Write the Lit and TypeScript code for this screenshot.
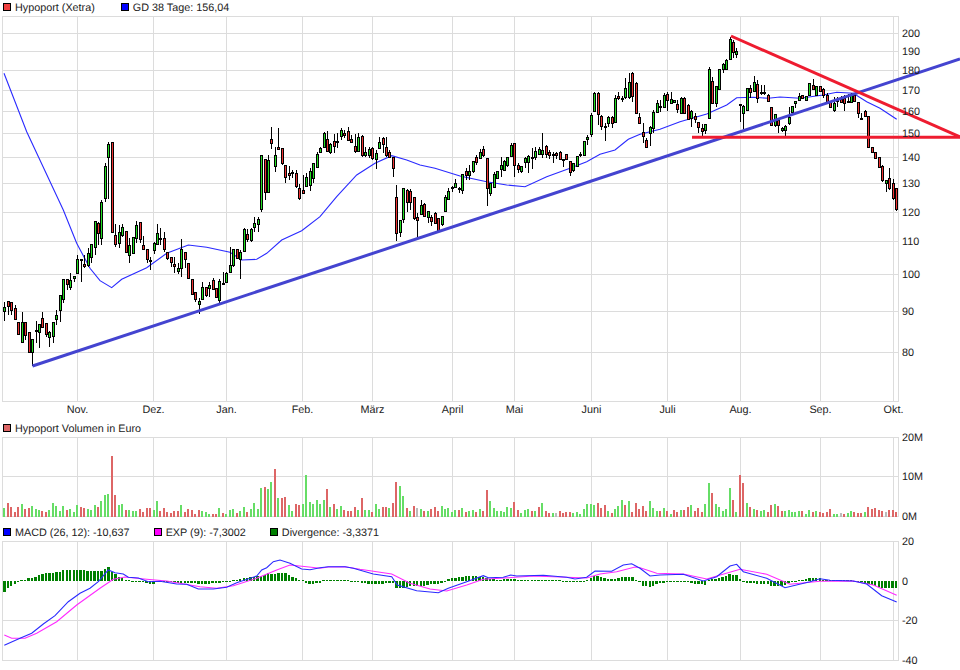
import { LitElement, html, svg, css } from "lit";
import { customElement } from "lit/decorators.js";

const X = (i: number) => 4.3 + 3.47 * i;

// candle rows: colour + body top, body bottom, wick top, wick bottom, in 3x crop units above a base y
const candleSections: [number, string][] = [
  [200, "G320,332,305,362 R302,318,302,345 R307,331,307,345 R325,358,315,358 R367,403,365,403 G367,425,337,430 R367,405,367,420 R397,455,397,455 G418,457,418,497 R390,392,362,430 G373,395,373,443 R355,382,337,382 R370,403,370,412 G397,412,393,440 G365,408,365,430 G345,356,330,375 G286,329,286,365 G237,298,237,310 R238,252,238,270 G240,262,220,270 G229,235,229,245 G178,218,165,220 R178,180,178,245 R193,198,165,205 G160,195,145,200 G133,170,133,190 G64,142,64,165 R70,100,65,135 G7,115,0,135"],
  [0, "G497,593,490,607 G433,470,425,597 R427,695,427,695"],
  [200, "R105,133,73,140 G97,128,75,145 G80,104,73,110 R92,155,92,155 G135,165,115,190 G112,160,112,163 G75,115,62,130 R67,117,67,130 R136,147,107,150 R148,178,148,190 R181,184,170,210 G130,150,125,163 G100,133,72,135 R113,116,85,135 R115,146,95,155 R157,175,155,180 R172,185,172,200 R193,199,170,220 G204,212,190,222 G148,205,118,230 R155,177,155,205 R190,233,190,233 R237,281,237,281 R277,296,277,305 G304,311,295,342 G260,298,245,300 R260,285,260,290 G256,265,245,290 R241,267,235,270 R265,290,265,295 G243,300,238,310 G250,252,215,255 G220,245,215,248 G196,215,140,218 G146,196,146,200 R148,175,148,175 G157,178,150,238 G87,152,85,153 R103,116,87,125 G88,120,85,125 G68,82,52,95 G58,71,50,97"],
  [0, "G466,627,466,636 R476,577,476,600 G481,575,465,580 R418,428,381,447 G466,497,440,515 R441,446,385,450 R445,488,445,495 R496,530,496,548 R520,524,498,540 R517,520,510,535 R520,557,510,563 R565,593,553,600 R571,578,525,580 G532,557,518,560 G514,554,505,572 G490,533,490,550 G463,500,455,503"],
  [100, "G145,157,142,157 G98,142,95,145 R118,152,92,152 G132,155,128,163 R122,137,102,158 R124,126,100,145 G90,108,85,120 R100,106,90,115 R94,120,82,122 R118,127,105,128 R139,152,102,158 G111,152,100,155 R108,165,105,170 G156,165,140,172 G148,165,140,175 R145,175,140,180 G158,178,150,208 G127,145,112,148 R115,132,110,160 R140,165,112,170 R155,172,150,175 R170,205,170,232 R292,398,255,422 G361,397,361,412 G265,356,265,370 R271,305,268,335 R272,305,268,330 R292,355,292,360 R352,361,338,410 G316,342,300,345 R313,349,310,352 G333,352,333,370 R350,362,345,378 R340,368,335,370 R355,389,355,392 G347,372,347,378 G292,334,285,335 G274,296,265,300 G261,264,258,275 G250,262,238,265 R265,268,262,280 G223,270,223,282 R212,226,205,240 G214,224,195,240 G183,214,183,218 R171,186,165,195 G156,175,148,178 R148,166,138,170 R175,265,173,317 G250,280,250,288 G222,262,215,265 G214,235,214,238 G196,206,172,230 G184,209,180,212 G172,196,172,200 G136,168,130,170 R130,195,128,232 R195,206,190,220 G198,212,198,220 G173,186,170,205 G167,186,165,220 R172,174,145,208 G154,172,140,180 G148,162,142,165 G150,163,100,175 R139,161,135,175 R155,165,150,178 R163,166,155,190 R158,165,155,178 R155,178,152,178 R176,178,176,202 R163,178,163,178 R184,216,184,228 G189,210,189,215 G168,197,168,197 R163,165,155,170 G124,165,124,168 G112,118,105,135 G45,103,38,110 G-21,32,-24,36 R-21,42,-24,75 R48,78,45,90 R78,82,70,122 G50,70,48,80 R50,70,48,85 G-5,67,-15,67 R-12,-6,-24,0 R-6,-3,-12,6 G-36,-9,-66,-3 G-54,-9,-80,-3 R-80,-12,-84,6 R-50,40,-54,42 R50,70,40,72"],
  [20, "R337,348,310,370 R360,380,355,385 G321,340,318,378 G277,323,270,340 G250,275,240,280 R257,259,240,275 G226,260,218,262 R222,240,215,272 G238,248,215,250 G240,246,240,250 R252,266,240,280 G234,280,232,282 R233,280,230,282 R255,297,252,298 G274,293,270,320 R287,298,280,310 R307,320,305,340 R325,332,312,347 G313,330,313,342 G148,295,142,295 R183,248,170,250 G198,248,198,260 G147,208,147,210 G133,147,130,158 G119,147,118,150 G57,117,52,120 R65,95,60,115 G93,103,85,113 R252,256,252,305 G258,280,255,328 G205,270,205,272 R205,215,195,235 G187,213,168,215 R193,233,180,248 R217,220,195,225 R217,219,195,225 R224,244,222,246 R262,316,262,318 G283,316,283,320 R300,316,296,340 G325,330,320,335 G318,331,316,348 G290,308,262,316 G259,276,259,278 G244,250,244,265 G227,240,218,242 R225,233,225,238 G229,241,228,243 G190,224,190,225 R196,206,178,210 G197,224,197,228 R198,212,198,215 R208,224,205,235 R224,250,218,252 R246,262,246,265 G248,270,232,275 R238,242,232,262 R238,247,228,250 R234,248,226,272 R243,246,222,250 G226,246,218,248 R226,243,218,245 R247,280,247,295 R294,297,280,300 R273,287,270,288 R287,380,287,382 R381,396,380,398 R396,415,396,418 R412,440,412,445 R438,481,435,485 G481,490,480,515 R475,503,445,510 R490,535,478,540 R505,568,505,572"],
];

type Candle = { c: string; t: number; b: number; wt: number; wb: number };
const candles: Candle[] = candleSections.flatMap(([base, rows]) =>
  rows.split(" ").map((r) => {
    const [t, b, wt, wb] = r.slice(1).split(",").map((n) => base + Number(n) / 3);
    return { c: r[0], t, b, wt, wb };
  })
);

const volumes =
  "G279 R264 R276 R291 R276 G267 R282 R279 G273 G282 G285 R288 R291 G285 G264 G273 G288 G273 R285 G282 G291 G270 R276 R279 G282 G285 G270 R276 G258 G240 G237 R123 R240 G270 G267 R285 G285 G288 G288 R282 R291 R279 R279 G285 G258 R288 R279 R291 R294 R288 R288 G270 R291 R282 R285 R297 R285 G288 G291 G297 R297 R297 G279 R294 G297 G285 G282 R294 G288 G276 R291 G282 G264 G282 G219 R216 G222 G201 R162 G249 R249 R246 G270 G288 R267 R270 G267 G180 G261 G267 G255 " +
  "G267 G255 R222 G276 R267 G282 G273 R285 R288 R288 R276 G285 R249 G285 G285 R291 G267 G282 R276 R276 G279 R264 R201 G213 G243 R279 G288 R273 N279 G282 R288 G288 R282 R276 R288 G273 G282 G279 G291 G285 R285 G279 R291 G288 G285 R291 G282 R288 R225 G258 G279 G288 G288 G291 G276 G279 R261 R285 G294 G285 G282 R288 G288 R276 G264 R288 R294 G294 N294 R288 R294 R291 R291 G294 G291 G297 G282 G267 G267 G270 R264 R279 R270 G288 R294 G282 G273 G255 R270 G258 R291 R264 R282 " +
  "R273 R288 G258 G279 G288 R288 G279 R288 G297 R285 R291 G285 R285 R276 G270 R288 R279 R291 G267 G204 R234 G267 G276 G288 G282 G219 R255 G291 R180 R204 G264 R276 G282 R285 G288 G285 R291 R270 G267 R273 R288 G288 G285 G291 G291 G288 R288 G297 G285 R291 G288 R291 R294 R291 R282 G297 G297 N294 R297 G294 G288 R291 R294 R294 G291 R276 R282 R279 R285 R288 N291 R285 R285 R291";

const hist = [
  -33, -20, -14, -8, -4, 1, 3, 9, 9, 12, 18, 21, 23, 24, 25, 26, 28, 32, 33, 33,
  33, 33, 33, 33, 30, 30, 30, 30, 30, 36, 42, 28, 20, 12, 8, 4, 1, -1, 0, -1,
  -4, -6, -8, -8, -4, -3, -3, -4, -3, -4, -5, -5, -5, -6, -6, -7, -9, -10, -10, -8,
  -7, -6, -5, -4, -3, -2, 1, 3, 5, 8, 10, 12, 13, 15, 16, 17, 25, 22, 22, 24,
  25, 23, 18, 12, 8, 3, 1, -5, -10, -8, -7, -6,
  3, 3, 3, 3, 3, 3, 3, 1, 0, -1, -3, -5, -7, -8, -10, -10, -9, -8, -7, -7,
  -7, -20, -22, -20, -18, -16, -15, -16, -15, -14, -12, -9, -8, -8, -6, -1, 5, 8, 9, 11,
  12, 14, 15, 15, 14, 13, 12, 8, 5, 6, 4, 3, 6, 6, 6, 5, 3, 3, 2, 2,
  2, 2, 2, 2, 2, 1, 1, 1, 1, -1, -3, -4, -4, -4, -4, -2, 2, 10, 14, 16,
  13, 8, 6, 6, 6, 8, 12, 13, 13, 12, 3, -1,
  -14, -16, -18, -15, -8, -7, -5, -2, -1, -1, 0, -1, -1, -4, -6, -8, -9, -10, -11, 3,
  5, 7, 9, 11, 16, 22, 18, 18, 6, -2, -7, -7, -6, -10, -10, -9, -10, -15, -16, -16,
  -15, -12, -6, -4, -2, 1, 3, 5, 8, 9, 9, 8, 4, 2, 1, 1, 1, 1, 1, 1,
  1, 0, -1, -3, -5, -8, -12, -15, -18, -20, -20, -20, -20, -20,
];

const crop = (x0: number, y0: number, pts: number[][]) =>
  pts.map(([x, y]) => `${(x0 + x / 3).toFixed(1)},${(y0 + y / 3).toFixed(1)}`).join(" ");

const maLine = [
  crop(0, 0, [[12, 220], [80, 395], [190, 630]]),
  crop(0, 200, [[230, 130], [270, 205], [300, 242], [335, 263], [365, 238], [440, 203], [500, 160], [565, 135], [620, 142], [690, 157], [725, 180], [770, 178], [800, 160], [845, 120], [905, 92]]),
  crop(320, 100, [[0, 350], [50, 290], [110, 225], [165, 190], [215, 167], [260, 180], [300, 195], [345, 205], [420, 228], [500, 245], [560, 255], [615, 260], [680, 230], [750, 205], [800, 185], [840, 163], [885, 150], [925, 118], [960, 103]]),
  crop(640, 20, [[60, 328], [120, 305], [200, 282], [260, 255], [290, 233], [340, 232], [385, 235], [420, 231], [480, 235], [550, 225], [590, 217], [640, 220], [680, 245], [720, 265], [770, 298]]),
].join(" ");

const macdLine = [
  crop(0, 520, [[13, 376], [60, 355], [95, 340], [130, 312], [165, 287], [205, 245], [240, 220], [270, 205], [295, 185], [325, 150], [345, 158], [370, 162], [385, 172], [415, 174], [445, 185], [480, 184], [530, 192], [560, 193], [595, 207], [640, 207], [680, 202], [710, 188], [770, 168], [785, 150], [800, 143], [820, 125], [840, 120], [870, 130], [905, 147], [930, 149]]),
  crop(320, 520, [[0, 143], [25, 140], [75, 140], [100, 145], [160, 162], [215, 170], [232, 195], [290, 212], [355, 218], [385, 205], [440, 185], [490, 167], [505, 173], [550, 172], [572, 165], [590, 168], [670, 166], [740, 172], [765, 177], [800, 172], [825, 153], [875, 154], [910, 135], [935, 131]]),
  crop(640, 520, [[0, 145], [30, 168], [60, 165], [130, 163], [190, 183], [230, 170], [270, 138], [290, 133], [310, 155], [380, 175], [435, 203], [510, 185], [540, 176], [570, 181], [640, 183], [680, 192], [725, 227], [770, 246]]),
].join(" ");

const expLine = [
  crop(0, 520, [[13, 345], [35, 355], [75, 355], [110, 340], [170, 305], [230, 255], [300, 205], [340, 178], [375, 171], [440, 178], [500, 183], [600, 200], [650, 205], [700, 197], [770, 175], [830, 150], [870, 135], [920, 140]]),
  crop(320, 520, [[0, 145], [25, 141], [75, 140], [120, 148], [215, 162], [270, 190], [330, 207], [380, 213], [440, 195], [490, 178], [540, 175], [640, 168], [740, 172], [800, 174], [840, 162], [890, 155], [945, 141]]),
  crop(640, 520, [[0, 143], [50, 160], [130, 162], [200, 177], [300, 148], [380, 163], [450, 193], [540, 184], [640, 183], [700, 195], [770, 226]]),
].join(" ");

const vGrid = [77, 153, 226, 302, 372, 452, 514, 591, 667, 740, 820, 893];
const months: [string, number][] = [
  ["Nov.", 77], ["Dez.", 153], ["Jan.", 226], ["Feb.", 302], ["März", 372], ["April", 452],
  ["Mai", 514], ["Juni", 591], ["Juli", 667], ["Aug.", 740], ["Sep.", 820], ["Okt.", 893],
];
const priceTicks: [string, number][] = [
  ["200", 33], ["190", 51], ["180", 70], ["170", 90], ["160", 111], ["150", 133], ["140", 157],
  ["130", 183], ["120", 212], ["110", 241], ["100", 274], ["90", 311], ["80", 352],
];

const L = 2.5;
const R = 898.5;

function frame(top: number, bottom: number, hs: number[]) {
  return svg`
    ${hs.map((y) => svg`<line class="grid" x1=${L} x2=${R} y1=${y + 0.5} y2=${y + 0.5}></line>`)}
    ${vGrid.map((x) => svg`<line class="grid" x1=${x + 0.5} x2=${x + 0.5} y1=${top + 0.5} y2=${bottom + 0.5}></line>`)}
    <rect class="frame" x=${L} y=${top + 0.5} width=${R - L} height=${bottom - top}></rect>`;
}

function candleMark(c: Candle, i: number) {
  const x = Math.round(X(i));
  const t = Math.round(c.t);
  const h = Math.max(1, Math.round(c.b) - t);
  return svg`
    <line class="wick" x1=${x + 0.5} x2=${x + 0.5} y1=${Math.round(c.wt)} y2=${Math.round(c.wb)}></line>
    <rect class=${c.c === "G" ? "up" : "down"} x=${x - 0.5} y=${t + 0.5} width="2" height=${h}></rect>`;
}

@customElement("app-root")
export class AppRoot extends LitElement {
  static styles = css`
    :host {
      display: flex;
      flex-direction: column;
      width: 960px;
      height: 670px;
      overflow: hidden;
      background: #fff;
      font-family: "Liberation Sans", Arial, sans-serif;
      font-size: 10.8px;
      text-rendering: geometricPrecision;
      color: #222;
    }
    svg {
      display: block;
      flex: none;
      width: 960px;
      overflow: visible;
    }
    svg text {
      font-family: "Liberation Sans", Arial, sans-serif;
      font-size: 10.8px;
      text-rendering: geometricPrecision;
      fill: #222;
    }
    .month {
      text-anchor: middle;
    }
    .legend {
      display: flex;
      align-items: center;
      flex: none;
      padding-left: 3px;
      white-space: nowrap;
    }
    .l1 { height: 13px; }
    .l2 { height: 16px; }
    .l3 { height: 18px; }
    .item {
      display: flex;
      align-items: center;
      gap: 4px;
    }
    .label { margin-top: 2px; }
    .gd { margin-left: 26px; }
    .exp { margin-left: 24px; }
    .div { margin-left: 24px; }
    .swatch {
      box-sizing: border-box;
      width: 8px;
      height: 8px;
      border: 1px solid #000;
    }
    .s-red { background: #f04040; }
    .s-blue { background: #0000ff; }
    .s-vol { background: #dd6666; }
    .s-mag { background: #ff00ff; }
    .s-green { background: #008000; }
    .grid {
      stroke: #dcdcdc;
      stroke-width: 1;
      shape-rendering: crispEdges;
    }
    .frame {
      fill: none;
      stroke: #dcdcdc;
      stroke-width: 1;
      shape-rendering: crispEdges;
    }
    .wick {
      stroke: #000;
      stroke-width: 1;
      shape-rendering: crispEdges;
    }
    .up, .down {
      stroke: #000;
      stroke-width: 1;
      shape-rendering: crispEdges;
    }
    .up { fill: #22dd22; }
    .down { fill: #ee3333; }
    .v-G, .v-R, .v-N, .h {
      shape-rendering: crispEdges;
    }
    .v-G { fill: #66dd66; }
    .v-R { fill: #dd6666; }
    .v-N { fill: #bbbbbb; }
    .h { fill: #008000; }
    .ma {
      fill: none;
      stroke: #2a2aff;
      stroke-width: 1.1;
    }
    .macd {
      fill: none;
      stroke: #2a2aff;
      stroke-width: 1.1;
    }
    .exp-line {
      fill: none;
      stroke: #ff2aff;
      stroke-width: 1.1;
    }
    .trend-blue {
      stroke: #4444d0;
      stroke-width: 3;
    }
    .trend-red {
      stroke: #ee1c30;
      stroke-width: 3;
    }
  `;

  render() {
    const vols = volumes.split(" ");
    return html`
      <div class="legend l1">
        <span class="item"><i class="swatch s-red"></i><span class="label">Hypoport (Xetra)</span></span>
        <span class="item gd"><i class="swatch s-blue"></i><span class="label">GD 38 Tage: 156,04</span></span>
      </div>
      <svg viewBox="0 13 960 407" height="407">
        ${frame(16, 401, [33, 51, 70, 90, 111, 133, 157, 183, 212, 241, 274, 311, 352])}
        <polyline class="ma" points=${maLine}></polyline>
        ${candles.map((c, i) => candleMark(c, i))}
        <line class="trend-blue" x1="32.5" y1="366" x2="960" y2="59"></line>
        <line class="trend-red" x1="731" y1="36" x2="960" y2="137"></line>
        <line class="trend-red" x1="692" y1="137.3" x2="960" y2="137.3"></line>
        ${priceTicks.map(([t, y]) => svg`<text x="902" y=${y + 4}>${t}</text>`)}
        ${months.map(([t, x]) => svg`<text class="month" x=${x + 0.5} y="413">${t}</text>`)}
      </svg>
      <div class="legend l2">
        <span class="item"><i class="swatch s-vol"></i><span class="label">Hypoport Volumen in Euro</span></span>
      </div>
      <svg viewBox="0 436 960 87" height="87">
        ${frame(437, 516, [476])}
        ${vols.map((v, i) => {
          const top = Math.round(415 + Number(v.slice(1)) / 3);
          return svg`<rect class=${"v-" + v[0]} x=${Math.round(X(i)) - 1} y=${top} width="2" height=${517 - top}></rect>`;
        })}
        <text x="902" y="441">20M</text>
        <text x="902" y="480">10M</text>
        <text x="902" y="520">0M</text>
      </svg>
      <div class="legend l3">
        <span class="item"><i class="swatch s-blue"></i><span class="label">MACD (26, 12): -10,637</span></span>
        <span class="item exp"><i class="swatch s-mag"></i><span class="label">EXP (9): -7,3002</span></span>
        <span class="item div"><i class="swatch s-green"></i><span class="label">Divergence: -3,3371</span></span>
      </div>
      <svg viewBox="0 541 960 129" height="129">
        ${frame(541, 660, [620])}
        ${hist.map((v, i) => {
          const h = Math.max(1, Math.round(Math.abs(v) / 3));
          const left = Math.round(X(i) - 1.2);
          const right = Math.round(X(i) + 1.2);
          return svg`<rect class="h" x=${left} y=${v > 0 ? 581 - h : 581} width=${right - left} height=${h}></rect>`;
        })}
        <polyline class="exp-line" points=${expLine}></polyline>
        <polyline class="macd" points=${macdLine}></polyline>
        <text x="902" y="545">20</text>
        <text x="902" y="585">0</text>
        <text x="902" y="624">-20</text>
        <text x="902" y="664">-40</text>
      </svg>
    `;
  }
}
